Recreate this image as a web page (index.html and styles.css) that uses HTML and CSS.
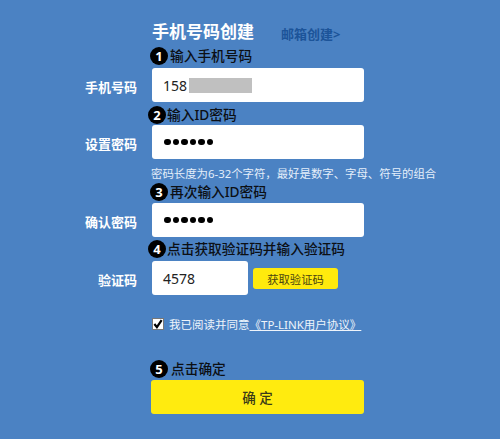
FILE: index.html
```html
<!DOCTYPE html>
<html lang="zh">
<head>
<meta charset="utf-8">
<title>手机号码创建</title>
<link rel="stylesheet" href="styles.css">
</head>
<body>
<main class="form">
  <div class="field title-row">
    <h1 class="title">手机号码创建</h1>
    <a class="alt-link">邮箱创建&gt;</a>
  </div>
  <div class="field step step-1"><span class="badge">1</span><span>输入手机号码</span></div>
  <div class="row row-1">
    <label class="label">手机号码</label>
    <div class="input"><span>158</span><span class="mask"></span></div>
  </div>
  <div class="field step step-2 shift"><span class="badge">2</span><span>输入ID密码</span></div>
  <div class="row row-2">
    <label class="label">设置密码</label>
    <div class="input dots"><i></i><i></i><i></i><i></i><i></i><i></i></div>
  </div>
  <p class="field hint">密码长度为6-32个字符，最好是数字、字母、符号的组合</p>
  <div class="field step step-3"><span class="badge">3</span><span>再次输入ID密码</span></div>
  <div class="row row-3">
    <label class="label">确认密码</label>
    <div class="input dots"><i></i><i></i><i></i><i></i><i></i><i></i></div>
  </div>
  <div class="field step step-4 shift"><span class="badge">4</span><span>点击获取验证码并输入验证码</span></div>
  <div class="row row-4">
    <label class="label">验证码</label>
    <div class="code-group">
      <div class="input short">4578</div>
      <button class="get-code">获取验证码</button>
    </div>
  </div>
  <div class="field agree">
    <span class="check"><svg viewBox="0 0 11 11" width="10" height="10"><path d="M1.5 5.5 L4.3 9 L9.5 1.2" fill="none" stroke="#000" stroke-width="2.4"/></svg></span>
    <span>我已阅读并同意<a class="terms">《TP-LINK用户协议》</a></span>
  </div>
  <div class="field step step-5"><span class="badge">5</span><span>点击确定</span></div>
  <div class="field"><button class="submit">确 定</button></div>
</main>
</body>
</html>
```
FILE: styles.css
```css
* { box-sizing: border-box; }
html, body { margin: 0; height: 100%; }
body {
  background: #4b82c3;
  font-family: "Noto Sans", "Noto Sans CJK SC", sans-serif;
  overflow: hidden;
}
.form { padding-top: 21px; width: 500px; }
.field { margin-left: 152px; }
.title-row { display: flex; align-items: center; height: 22px; }
.title { margin: 0; font-size: 17px; font-weight: 700; color: #fff; line-height: 22px; width: 129px; white-space: nowrap; }
.alt-link { font-size: 13px; font-weight: 700; color: #1c5499; position: relative; top: 1px; white-space: nowrap; }
.step {
  display: flex; align-items: center; gap: 2px;
  height: 18px; font-size: 13.7px; line-height: 18px; color: #0c0f14; font-weight: 500;
  white-space: nowrap; margin-left: 150px;
}
.step.shift { margin-left: 148px; gap: 1px; }
.badge {
  width: 18px; height: 18px; border-radius: 50%; background: #000; color: #fff;
  font-size: 13px; font-weight: 700; text-align: center; line-height: 18px; flex: none;
}
.step-1 { margin-top: 4px; }
.step-2 { margin-top: 4px; }
.step-3 { margin-top: 0; }
.step-4 { margin-top: 3px; }
.step-5 { margin-top: 27px; gap: 3px; }
.row { display: flex; align-items: center; gap: 15px; }
.row-1 { margin-top: 3px; }
.row-2 { margin-top: 1px; }
.row-3 { margin-top: 2px; }
.row-4 { margin-top: 3px; }
.label { width: 137px; text-align: right; color: #fff; font-size: 13px; font-weight: 700; position: relative; top: 1px; }
.input {
  width: 212px; height: 34px; background: #fff; border-radius: 3px;
  display: flex; align-items: center; padding-left: 11px;
  font-size: 14px; color: #222;
}
.mask { width: 63px; height: 15px; background: #c0c0c0; margin-left: 2px; }
.dots { gap: 2px; padding-left: 12px; }
.dots i { width: 6.5px; height: 6.5px; border-radius: 50%; background: #000; }
.short { width: 96px; }
.code-group { display: flex; align-items: center; gap: 5px; }
.get-code {
  width: 85px; height: 21px; padding: 0; border: 0; border-radius: 3px; background: #ffea0d;
  font: 11.3px "Noto Sans", "Noto Sans CJK SC", sans-serif; color: #4a4410; margin-top: 1px;
}
.hint { margin-top: 6px; margin-bottom: 0; height: 18px; font-size: 11.4px; line-height: 18px; color: #e4eefa; white-space: nowrap; margin-left: 151px; }
.agree { display: flex; align-items: center; gap: 5px; margin-top: 20px; height: 18px; font-size: 11.5px; color: #eef4fb; margin-left: 152px; white-space: nowrap; }
.check { width: 12px; height: 12px; background: #fff; border: 1px solid #777; display: flex; align-items: center; justify-content: center; }
.terms { text-decoration: underline; }
.submit {
  display: block; width: 213px; height: 34px; margin: 2px 0 0 -1px; padding: 0; border: 0; border-radius: 3px;
  background: #ffeb0f; color: #3a3a18; font: 500 13.5px "Noto Sans", "Noto Sans CJK SC", sans-serif;
}
```
